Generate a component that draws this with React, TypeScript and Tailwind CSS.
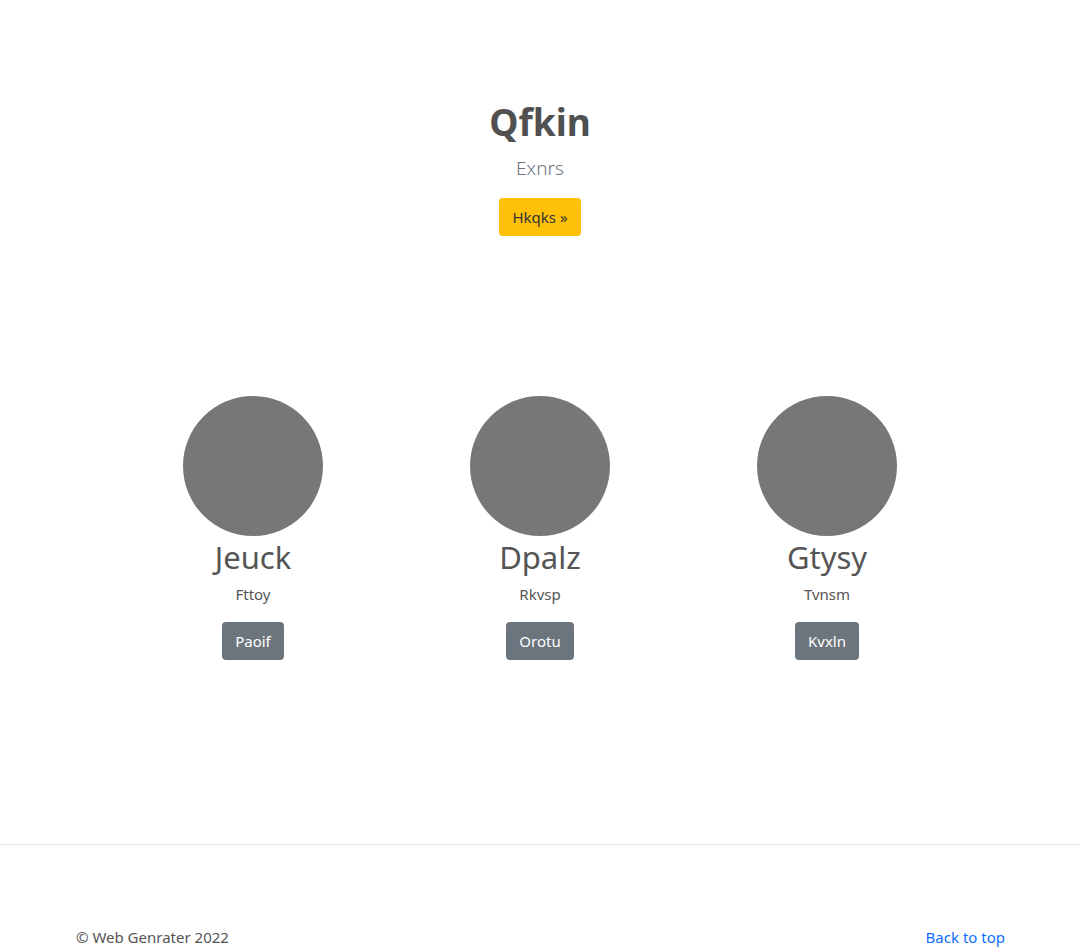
import { FC } from "react";

interface PersonProps {
  name: string;
  role: string;
  action: string;
}

const Person: FC<PersonProps> = ({ name, role, action }) => {
  return (
    <div className="flex flex-col items-center text-center">
      <div className="w-[140px] h-[140px] rounded-full bg-[#777777]" />
      <h2 className="mt-[1px] text-[31px] leading-[40px] font-normal text-[#555555]">{name}</h2>
      <p className="mt-[7px] text-[15px] leading-[20px] text-[#555555]">{role}</p>
      <button className="mt-[18px] h-[38px] px-[13px] rounded-[4px] bg-[#6c757d] text-white text-[15px]">
        {action}
      </button>
    </div>
  );
};

export default function App() {
  return (
    <div className="min-h-screen bg-white font-['Noto_Sans',sans-serif] text-[#555555]">
      <main>
        <section className="flex flex-col items-center text-center pt-[96px]">
          <h1 className="text-[37px] leading-[52px] font-bold text-[#505050]">Qfkin</h1>
          <p className="mt-[7px] text-[19px] leading-[26px] font-light text-[#6c757d]">Exnrs</p>
          <button className="mt-[17px] h-[38px] px-[13px] rounded-[4px] bg-[#ffc107] text-[#333] text-[15px]">
            Hkqks »
          </button>
        </section>
        <section className="mt-[160px] mx-auto w-[861px] grid grid-cols-3">
          <Person name="Jeuck" role="Fttoy" action="Paoif" />
          <Person name="Dpalz" role="Rkvsp" action="Orotu" />
          <Person name="Gtysy" role="Tvnsm" action="Kvxln" />
        </section>
        <hr className="mt-[184px] border-t border-[#e5e5e5]" />
        <footer className="mx-auto w-[936px] flex justify-between pt-[80px] text-[15px] leading-[24px]">
          <p className="pl-[4px]">© Web Genrater 2022</p>
          <a href="#" className="text-[#0d6efd] pr-[3px]">Back to top</a>
        </footer>
      </main>
    </div>
  );
}
